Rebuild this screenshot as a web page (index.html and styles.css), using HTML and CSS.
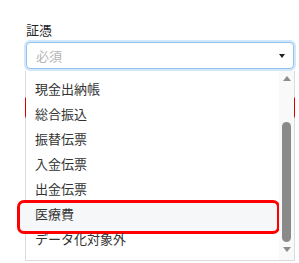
FILE: index.html
```html
<html>

<head>
	<meta charset="utf-8">
	<link rel="stylesheet" href="styles.css">
</head>

<body>
	<div class="label">証憑</div>
	<div class="select_wrap">
		<div class="select_box">
			<span class="placeholder">必須</span>
			<span class="caret"></span>
		</div>
		<div class="dropdown">
			<div class="options">
				<div class="option">現金出納帳</div>
				<div class="option">総合振込</div>
				<div class="option">振替伝票</div>
				<div class="option">入金伝票</div>
				<div class="option">出金伝票</div>
				<div class="option selected">医療費</div>
				<div class="option">データ化対象外</div>
			</div>
			<div class="scrollbar">
				<span class="arrow_up"></span>
				<span class="thumb"></span>
				<span class="arrow_down"></span>
			</div>
		</div>
	</div>
	<div class="input_box error"></div>
</body>
</html>
```

FILE: styles.css
```css
* {
	margin: 0;
	padding: 0;
	box-sizing: border-box;
}

body {
	padding: 21px 0 0 26px;
	font-family: "Noto Sans CJK JP", "Noto Sans", sans-serif;
	font-size: 13px;
	color: #333;
	background: #fff;
}

.label {
	line-height: 18px;
	color: #222;
}

.select_wrap {
	position: relative;
	width: 268px;
	margin-top: 3px;
	z-index: 2;
}

.select_box {
	display: flex;
	align-items: center;
	justify-content: space-between;
	height: 27px;
	padding: 0 8px 0 9px;
	border: 1px solid #92c3ee;
	border-radius: 4px;
	box-shadow: 0 0 0 2px #d3e7fa;
	background: #fff;
}

.placeholder {
	color: #b4b4b4;
}

.caret {
	width: 0;
	height: 0;
	border-left: 3px solid transparent;
	border-right: 3px solid transparent;
	border-top: 4px solid #222;
}

.dropdown {
	position: absolute;
	top: 29px;
	left: -1px;
	width: 270px;
	height: 190px;
	display: flex;
	background: #fff;
	background-clip: padding-box;
	border: 1px solid rgba(0, 0, 0, 0.14);
	border-top: none;
}

.options {
	flex: 1;
	padding-top: 5px;
}

.option {
	padding-left: 9px;
	line-height: 25px;
	white-space: nowrap;
}

.option.selected {
	margin: -1.5px -1px -7.5px -9px;
	padding: 0 0 6px 15px;
	line-height: 22px;
	border: 3px solid #ff0000;
	border-radius: 7px;
	background: #f6f7f9;
}

.scrollbar {
	width: 15px;
	display: flex;
	flex-direction: column;
	align-items: center;
	padding-top: 5px;
	background: #f9f9f9;
}

.arrow_up,
.arrow_down {
	width: 0;
	height: 0;
	border-left: 4px solid transparent;
	border-right: 4px solid transparent;
}

.arrow_up {
	border-bottom: 5px solid #8c8c8c;
}

.arrow_down {
	margin-top: 5px;
	border-top: 5px solid #8c8c8c;
}

.thumb {
	width: 9px;
	height: 120px;
	margin-top: 41px;
	border-radius: 5px;
	background: #8a8a8a;
}

.input_box {
	width: 270px;
	height: 23px;
	margin: 27px 0 0 -1px;
	border: 1px solid #ccc;
	border-radius: 3px;
}

.input_box.error {
	border-color: #ff0000;
}
```
